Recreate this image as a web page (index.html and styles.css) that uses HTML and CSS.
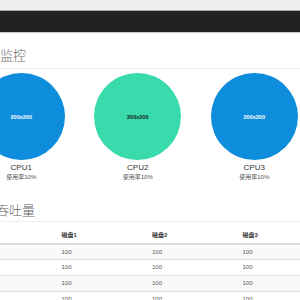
FILE: index.html
```html
<!DOCTYPE html>
<html lang="zh-CN">

<head>
    <meta charset="UTF-8">
    <meta name="viewport" content="width=device-width, initial-scale=1.0">
    <title>服务器监控</title>
    <link rel="stylesheet" href="styles.css">
</head>

<body>

    <div class="top-strip"></div>
    <nav class="navbar"></nav>

    <div class="container">
        <!-- CPU -->
        <h2 class="page-header">监控</h2>

        <div class="cpu-row">
            <div class="cpu-item">
                <div class="circle circle-blue">200x200</div>
                <h4>CPU1</h4>
                <span class="usage">使用率10%</span>
            </div>
            <div class="cpu-item">
                <div class="circle circle-green">200x200</div>
                <h4>CPU2</h4>
                <span class="usage">使用率10%</span>
            </div>
            <div class="cpu-item">
                <div class="circle circle-blue">200x200</div>
                <h4>CPU3</h4>
                <span class="usage">使用率10%</span>
            </div>
        </div>

        <!-- Disk throughput -->
        <h2 class="page-header second">吞吐量</h2>

        <table class="table">
            <thead>
                <tr>
                    <th></th>
                    <th>磁盘1</th>
                    <th>磁盘2</th>
                    <th>磁盘3</th>
                </tr>
            </thead>
            <tbody>
                <tr><td></td><td>100</td><td>100</td><td>100</td></tr>
                <tr><td></td><td>100</td><td>100</td><td>100</td></tr>
                <tr><td></td><td>100</td><td>100</td><td>100</td></tr>
                <tr><td></td><td>100</td><td>100</td><td>100</td></tr>
            </tbody>
        </table>
    </div>

</body>

</html>
```

FILE: styles.css
```css
/* Reset */
* {
    box-sizing: border-box;
    margin: 0;
    padding: 0;
}

body {
    font-family: 'Liberation Sans', 'Noto Sans CJK SC', sans-serif;
    color: #333;
    background: #fff;
    overflow: hidden;
}

/* Top bars */
.top-strip {
    height: 11px;
    background: #eee;
    border-bottom: 1px solid #aaa;
}

.navbar {
    height: 22px;
    background: #222;
    border-bottom: 1px solid #c8c8c8;
}

/* Page body, cut on the left like the screenshot */
.container {
    margin-left: -33px;
    width: 362px;
}

.page-header {
    margin-top: 14px;
    padding: 0 0 5px 33px;
    font-family: 'Noto Sans CJK SC', sans-serif;
    font-weight: 300;
    font-size: 13px;
    line-height: 16px;
    color: #666;
    border-bottom: 1px solid #eee;
}

.page-header.second {
    margin-top: 21px;
    padding-left: 29px;
    padding-bottom: 3px;
}

/* CPU circles */
.cpu-row {
    display: grid;
    grid-template-columns: repeat(3, 116.5px);
    margin: 4px 0 0 -4px;
}

.cpu-item {
    display: flex;
    flex-direction: column;
    align-items: center;
}

.circle {
    width: 87px;
    height: 87px;
    border-radius: 50%;
    display: flex;
    align-items: center;
    justify-content: center;
    font-size: 5.5px;
    font-weight: bold;
}

.circle-blue {
    background: #0d8ddb;
    color: #fff;
}

.circle-green {
    background: #39dbac;
    color: #1a1a1a;
}

.cpu-item h4 {
    margin-top: 3px;
    font-size: 8px;
    font-weight: normal;
    line-height: 10px;
    color: #333;
}

.usage {
    font-size: 6px;
    line-height: 8px;
    color: #555;
}

/* Table */
.table {
    width: 100%;
    margin-top: 6px;
    border-collapse: collapse;
    table-layout: fixed;
    font-size: 6px;
}

.table th,
.table td {
    padding: 3px 4px;
    line-height: 8.7px;
    text-align: left;
    border-top: 1px solid #ddd;
}

.table th {
    color: #333;
    font-weight: bold;
    border-top: 0;
    border-bottom: 2px solid #ddd;
}

.table td {
    color: #555;
}

.table tbody tr:nth-child(odd) {
    background: #f9f9f9;
}
```
